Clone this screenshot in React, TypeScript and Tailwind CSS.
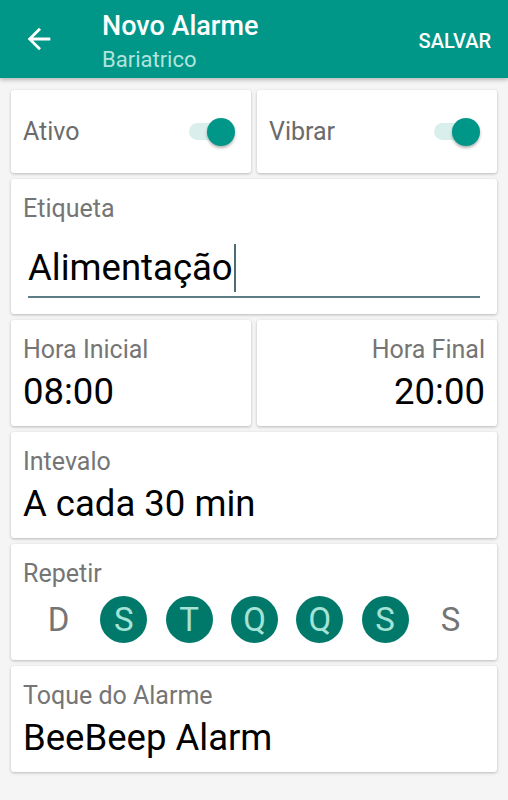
import React from "react";

const days = [
  { label: "D", on: false },
  { label: "S", on: true },
  { label: "T", on: true },
  { label: "Q", on: true },
  { label: "Q", on: true },
  { label: "S", on: true },
  { label: "S", on: false },
];

const Card: React.FC<{ className?: string; children: React.ReactNode }> = ({ className = "", children }) => (
  <div className={`bg-white rounded-[3px] shadow-[0_1px_3px_rgba(0,0,0,0.25)] ${className}`}>{children}</div>
);

const Toggle: React.FC = () => (
  <div className="relative w-[46px] h-[30px] flex items-center">
    <div className="w-[40px] h-[17px] rounded-full bg-[#d9efec]" />
    <div className="absolute right-0 top-[1px] w-[28px] h-[28px] rounded-full bg-[#009688] shadow-[0_2px_3px_rgba(0,0,0,0.3)]" />
  </div>
);

const Label: React.FC<{ children: React.ReactNode }> = ({ children }) => (
  <div className="text-[25px] leading-[30px] text-[#757575]">{children}</div>
);

const Value: React.FC<{ children: React.ReactNode }> = ({ children }) => (
  <div className="text-[36.5px] leading-[44px] text-black mt-[5px] whitespace-nowrap">{children}</div>
);

export default function App() {
  return (
    <div className="w-[508px] h-[800px] bg-[#f5f5f5] font-['Roboto',sans-serif] overflow-hidden">
      <header className="h-[78px] bg-[#009688] flex items-start shadow-[0_2px_4px_rgba(0,0,0,0.25)] relative z-10">
        <div className="w-[102px] pl-[22px] pt-[22px]">
          <svg width="34" height="34" viewBox="0 0 24 24" fill="white">
            <path d="M20 11H7.83l5.59-5.59L12 4l-8 8 8 8 1.41-1.41L7.83 13H20v-2z" />
          </svg>
        </div>
        <div className="flex-1 flex flex-col pt-[10px]">
          <span className="text-white text-[27px] font-medium leading-[32px]">Novo Alarme</span>
          <span className="text-[#b2e4dc] text-[22px] leading-[26px] mt-[5px]">Bariatrico</span>
        </div>
        <span className="text-white text-[20px] leading-[24px] font-medium pr-[17px] pt-[29px]">SALVAR</span>
      </header>

      <div className="px-[11px] pt-[12px] flex flex-col gap-[6px]">
        <div className="grid grid-cols-2 gap-[6px]">
          <Card className="h-[83px] flex items-center justify-between pl-[12px] pr-[16px]">
            <span className="text-[25px] text-[#6b6b6b]">Ativo</span>
            <Toggle />
          </Card>
          <Card className="h-[83px] flex items-center justify-between pl-[12px] pr-[17px]">
            <span className="text-[25px] text-[#6b6b6b]">Vibrar</span>
            <Toggle />
          </Card>
        </div>

        <Card className="h-[135px] px-[12px] pt-[15px]">
          <Label>Etiqueta</Label>
          <div className="mx-[5px] mt-[20px] border-b-2 border-[#5f7d84] pb-[4px] flex items-center">
            <span className="text-[36.5px] leading-[44px] text-black">Alimentação</span>
            <span className="w-[2px] h-[48px] bg-[#4f6b72] ml-[1px]" />
          </div>
        </Card>

        <div className="grid grid-cols-2 gap-[6px]">
          <Card className="h-[106px] px-[12px] pt-[15px]">
            <Label>Hora Inicial</Label>
            <Value>08:00</Value>
          </Card>
          <Card className="h-[106px] px-[12px] pt-[15px] text-right">
            <Label>Hora Final</Label>
            <Value>20:00</Value>
          </Card>
        </div>

        <Card className="h-[106px] px-[12px] pt-[15px]">
          <Label>Intevalo</Label>
          <Value>A cada 30 min</Value>
        </Card>

        <Card className="h-[116px] px-[12px] pt-[15px]">
          <Label>Repetir</Label>
          <div className="flex justify-between pl-[12px] pr-[11px] mt-[7px]">
            {days.map((d, i) => (
              <div
                key={i}
                className={
                  d.on
                    ? "w-[47px] h-[47px] rounded-full bg-[#00796b] flex items-center justify-center text-[33px] text-[#a5e3d6]"
                    : "w-[47px] h-[47px] rounded-full flex items-center justify-center text-[33px] text-[#757575]"
                }
              >
                {d.label}
              </div>
            ))}
          </div>
        </Card>

        <Card className="h-[106px] px-[12px] pt-[15px]">
          <Label>Toque do Alarme</Label>
          <Value>BeeBeep Alarm</Value>
        </Card>
      </div>
    </div>
  );
}
